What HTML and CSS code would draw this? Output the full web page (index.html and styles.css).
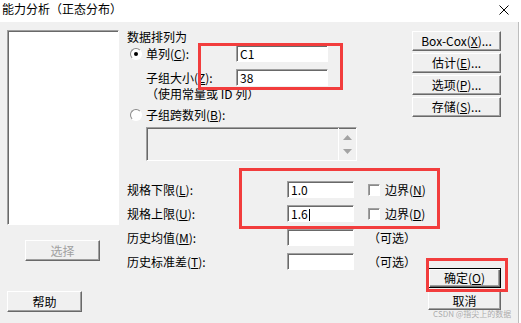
FILE: index.html
```html
<!DOCTYPE html>
<html lang="zh-CN">
    <head>
        <title>能力分析（正态分布）</title>
        <meta charset="utf-8" />
        <meta name="viewport" content="width=device-width, initial-scale=1.0" />
        <link rel="stylesheet" href="styles.css">
    </head>
    <body>
        <div class="dialog">
            <div class="titlebar">
                <span class="title">能力分析（正态分布）</span>
                <svg class="close" width="10" height="10" viewBox="0 0 10 10">
                    <path d="M0.5 0.5L9.5 9.5M9.5 0.5L0.5 9.5" stroke="#000" stroke-width="1" fill="none" />
                </svg>
            </div>
            <div class="content">
                <div class="left">
                    <div class="listbox"></div>
                    <button class="btn select" type="button" disabled>选择</button>
                    <button class="btn help" type="button">帮助</button>
                </div>
                <div class="main">
                    <div class="top">
                        <div class="arrange">
                            <div class="caption">数据排列为</div>
                            <div class="row">
                                <span class="radio checked"></span>
                                <span class="label">单列(<u>C</u>):</span>
                                <div class="field wide">C1</div>
                            </div>
                            <div class="row row-size">
                                <span class="label">子组大小(<u>Z</u>):</span>
                                <div class="field wide">38</div>
                            </div>
                            <div class="hint">（使用常量或 ID 列）</div>
                            <div class="row row-across">
                                <span class="radio"></span>
                                <span class="label">子组跨数列(<u>B</u>):</span>
                            </div>
                            <div class="multibox">
                                <div class="scroll">
                                    <svg width="9" height="5" viewBox="0 0 9 5"><path d="M4.5 0L9 5H0Z" fill="#a3a3a3" /></svg>
                                    <svg width="9" height="5" viewBox="0 0 9 5"><path d="M0 0H9L4.5 5Z" fill="#a3a3a3" /></svg>
                                </div>
                            </div>
                        </div>
                        <div class="side">
                            <button class="btn" type="button">Box-Cox(<u>X</u>)...</button>
                            <button class="btn" type="button">估计(<u>E</u>)...</button>
                            <button class="btn" type="button">选项(<u>P</u>)...</button>
                            <button class="btn" type="button">存储(<u>S</u>)...</button>
                        </div>
                    </div>
                    <div class="bottom">
                        <div class="spec">
                            <span class="label">规格下限(<u>L</u>):</span>
                            <div class="field">1.0</div>
                            <span></span>
                            <div class="check-item"><span class="check"></span><span class="label">边界(<u>N</u>)</span></div>

                            <span class="label">规格上限(<u>U</u>):</span>
                            <div class="field">1.6<span class="caret"></span></div>
                            <span></span>
                            <div class="check-item"><span class="check"></span><span class="label">边界(<u>D</u>)</span></div>

                            <span class="label">历史均值(<u>M</u>):</span>
                            <div class="field"></div>
                            <span></span>
                            <span class="label">（可选）</span>

                            <span class="label">历史标准差(<u>T</u>):</span>
                            <div class="field"></div>
                            <span></span>
                            <span class="label">（可选）</span>
                        </div>
                        <div class="confirm">
                            <button class="btn default" type="button">确定(<u>O</u>)</button>
                            <button class="btn cancel" type="button">取消</button>
                        </div>
                    </div>
                </div>
            </div>
            <div class="mark mark-column"></div>
            <div class="mark mark-spec"></div>
            <div class="mark mark-ok"></div>
            <div class="watermark">CSDN @指尖上的数据</div>
        </div>
    </body>
</html>
```

FILE: styles.css
```css
html, body {
    margin: 0px;
    padding: 0px;
    background: white;
    font-family: "Noto Sans CJK SC", sans-serif;
    font-size: 12px;
    color: black;
}
.dialog {
    position: relative;
    width: 521px;
    height: 323px;
    overflow: hidden;
}
.titlebar {
    display: flex;
    justify-content: space-between;
    height: 22px;
    background: white;
    line-height: 18px;
}
.title {
    padding-left: 2px;
}
.close {
    margin: 5px 12px 0px 0px;
}
.content {
    display: flex;
    width: 518px;
    height: 301px;
    border-right: 1px solid #bdbdbd;
    background: #f0f0f0;
}
.left {
    display: flex;
    flex-direction: column;
    align-items: flex-start;
    padding-left: 7px;
    width: 112px;
}
.listbox {
    box-sizing: border-box;
    margin-top: 8px;
    width: 112px;
    height: 195px;
    border: 1px solid;
    border-color: #a0a0a0 #fff #fff #a0a0a0;
    box-shadow: inset 1px 1px 0px #696969;
    background: white;
}
.btn {
    box-sizing: border-box;
    margin: 0px;
    padding: 0px;
    height: 20px;
    border: 1px solid;
    border-color: #fff #696969 #696969 #fff;
    box-shadow: inset -1px -1px 0px #a0a0a0;
    background: #f0f0f0;
    font-family: "Noto Sans CJK SC", sans-serif;
    font-size: 12px;
    line-height: 16px;
    color: black;
}
.btn.select {
    margin: 15px 0px 0px 18px;
    width: 75px;
    height: 21px;
    color: #a0a0a0;
}
.btn.help {
    margin-top: 30px;
    width: 75px;
    height: 21px;
}
.btn.default {
    border-color: #000;
    box-shadow: inset 1px 1px 0px #fff, inset -1px -1px 0px #696969, inset -2px -2px 0px #a0a0a0;
}
.btn.cancel {
    height: 19px;
    line-height: 14px;
}
.main {
    margin-left: 8px;
    flex: 1;
}
.top {
    display: flex;
}
.arrange {
    width: 285px;
}
.caption {
    margin-top: 7px;
    height: 16px;
    line-height: 16px;
}
.row {
    display: flex;
    align-items: center;
    height: 17px;
}
.row .label {
    width: 90px;
}
.row-size {
    margin-top: 7px;
    padding-left: 19px;
}
.hint {
    margin-top: 1px;
    padding-left: 19px;
    height: 13px;
    line-height: 13px;
}
.row-across {
    margin-top: 8px;
    height: 14px;
}
.label {
    line-height: 14px;
    white-space: nowrap;
}
.radio {
    box-sizing: border-box;
    display: flex;
    align-items: center;
    justify-content: center;
    margin: 0px 4px 0px 3px;
    width: 12px;
    height: 12px;
    border: 1px solid;
    border-color: #8a8a8a #fff #fff #8a8a8a;
    border-radius: 50%;
    background: white;
}
.radio.checked::after {
    content: "";
    width: 4px;
    height: 4px;
    border-radius: 50%;
    background: black;
}
.field {
    box-sizing: border-box;
    padding-left: 3px;
    width: 67px;
    height: 17px;
    border: 1px solid;
    border-color: #a0a0a0 #fff #fff #a0a0a0;
    box-shadow: inset 1px 1px 0px #696969;
    background: white;
    line-height: 15px;
    white-space: nowrap;
}
.field.wide {
    width: 92px;
}
.caret {
    display: inline-block;
    margin-left: 1px;
    width: 1px;
    height: 12px;
    background: black;
    vertical-align: -2px;
}
.multibox {
    box-sizing: border-box;
    display: flex;
    justify-content: flex-end;
    margin: 5px 0px 0px 19px;
    width: 211px;
    height: 34px;
    border: 1px solid;
    border-color: #a0a0a0 #fff #fff #a0a0a0;
    box-shadow: inset 1px 1px 0px #696969;
}
.scroll {
    display: flex;
    flex-direction: column;
    justify-content: space-around;
    align-items: center;
    padding: 2px 0px;
    width: 17px;
    border-left: 1px solid #fff;
}
.side {
    display: flex;
    flex-direction: column;
    gap: 2px;
    margin-top: 9px;
    width: 89px;
}
.bottom {
    display: flex;
    margin-top: 20px;
}
.spec {
    display: grid;
    grid-template-columns: 160px 67px 14px 59px;
    grid-auto-rows: 17px;
    row-gap: 7px;
    align-items: center;
}
.check-item {
    display: flex;
    align-items: center;
    gap: 5px;
    white-space: nowrap;
}
.check {
    box-sizing: border-box;
    flex-shrink: 0;
    width: 12px;
    height: 12px;
    border: 1px solid;
    border-color: #a0a0a0 #fff #fff #a0a0a0;
    box-shadow: inset 1px 1px 0px #8a8a8a;
    background: white;
}
.confirm {
    display: flex;
    flex-direction: column;
    gap: 3px;
    margin-left: 1px;
    padding-top: 87px;
    width: 73px;
}
.mark {
    position: absolute;
    box-sizing: border-box;
    border: 3px solid #f23d3d;
}
.mark-column {
    left: 198px;
    top: 43px;
    width: 145px;
    height: 47px;
}
.mark-spec {
    left: 239px;
    top: 168px;
    width: 201px;
    height: 61px;
}
.mark-ok {
    left: 426px;
    top: 258px;
    width: 82px;
    height: 34px;
}
.watermark {
    position: absolute;
    left: 433px;
    top: 309px;
    font-size: 8px;
    line-height: 10px;
    color: rgba(140, 140, 140, 0.7);
    white-space: nowrap;
}
```
